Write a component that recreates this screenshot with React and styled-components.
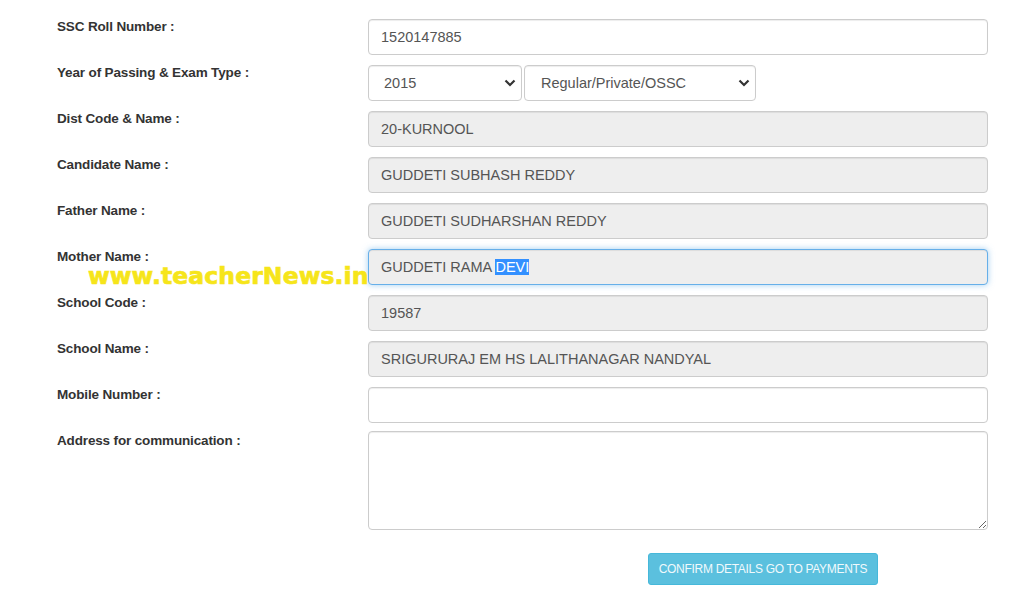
import React from "react";
import styled, { createGlobalStyle } from "styled-components";

const Global = createGlobalStyle`
  html, body { margin: 0; padding: 0; background: #fff; }
  body { font-family: "Liberation Sans", Arial, sans-serif; }
  * { box-sizing: border-box; }
`;

const Page = styled.div`
  position: relative;
  width: 1024px;
  height: 595px;
  overflow: hidden;
  padding: 19px 0 0 57px;
`;

const Form = styled.div`
  display: grid;
  grid-template-columns: 311px 620px;
  row-gap: 10px;
`;

const Label = styled.div`
  font-family: "Liberation Sans", Arial, sans-serif;
  font-weight: bold;
  font-size: 13.5px;
  line-height: 16px;
  color: #333;
  padding-top: 0;
  letter-spacing: -0.15px;
`;

const Field = styled.div`
  height: 36px;
  border: 1px solid ${(p) => (p.$focused ? "#66afe9" : "#ccc")};
  border-radius: 4px;
  background: ${(p) => (p.$disabled ? "#eee" : "#fff")};
  box-shadow: ${(p) =>
    p.$focused
      ? "inset 0 1px 1px rgba(0,0,0,.075), 0 0 6px rgba(102,175,233,.6)"
      : "inset 0 1px 1px rgba(0,0,0,.075)"};
  padding: 0 12px;
  display: flex;
  align-items: center;
  font-size: 14.5px;
  color: #555;
  white-space: pre;
`;

const Selected = styled.span`
  background: #3390ff;
  color: #fff;
`;

const SelectRow = styled.div`
  display: flex;
  gap: 2px;
`;

const Select = styled.div`
  width: ${(p) => p.$w}px;
  height: 36px;
  border: 1px solid #ccc;
  border-radius: 4px;
  background: #fff;
  box-shadow: inset 0 1px 1px rgba(0,0,0,.075);
  display: flex;
  align-items: center;
  justify-content: space-between;
  padding: 0 5px 0 ${(p) => p.$pl}px;
  font-size: 14.5px;
  color: #555;
`;

const TextArea = styled.textarea`
  display: block;
  width: 620px;
  height: 99px;
  border: 1px solid #ccc;
  border-radius: 4px;
  box-shadow: inset 0 1px 1px rgba(0,0,0,.075);
  padding: 6px 12px;
  font-family: "Liberation Sans", Arial, sans-serif;
  font-size: 14.5px;
  color: #555;
  outline: none;
  margin-top: -2px;
`;

const ButtonRow = styled.div`
  padding: 23px 0 0 591px;
`;

const Button = styled.button`
  width: 230px;
  height: 32px;
  background: #5bc0de;
  border: 1px solid #46b8da;
  border-radius: 3px;
  color: #f0f9fc;
  font-family: "Liberation Sans", Arial, sans-serif;
  font-size: 12px;
  text-transform: uppercase;
  letter-spacing: -0.3px;
  padding: 0;
`;

const Watermark = styled.div`
  position: absolute;
  left: 88px;
  top: 264px;
  font-family: "DejaVu Sans", Verdana, sans-serif;
  font-weight: bold;
  font-size: 23.5px;
  line-height: 24px;
  color: #f6e51a;
  -webkit-text-stroke: 0.7px #f6e51a;
  letter-spacing: 0.1px;
  pointer-events: none;
`;

const Chevron = () => (
  <svg width="12" height="8" viewBox="0 0 12 8">
    <path d="M1.5 1.5 L6 6 L10.5 1.5" fill="none" stroke="#333" strokeWidth="2.2" />
  </svg>
);

const rows = [
  { label: "SSC Roll Number :", value: "1520147885" },
  { label: "Year of Passing & Exam Type :", select: true },
  { label: "Dist Code & Name :", value: "20-KURNOOL", disabled: true },
  { label: "Candidate Name :", value: "GUDDETI SUBHASH REDDY", disabled: true },
  { label: "Father Name :", value: "GUDDETI SUDHARSHAN REDDY", disabled: true },
  { label: "Mother Name :", mother: true },
  { label: "School Code :", value: "19587", disabled: true },
  { label: "School Name :", value: "SRIGURURAJ EM HS LALITHANAGAR NANDYAL", disabled: true },
  { label: "Mobile Number :", value: "" },
];

export default function App() {
  return (
    <>
      <Global />
      <Page>
        <Form>
          {rows.map((r) => (
            <React.Fragment key={r.label}>
              <Label>{r.label}</Label>
              {r.select ? (
                <SelectRow>
                  <Select $w={154} $pl={15}>
                    <span>2015</span>
                    <Chevron />
                  </Select>
                  <Select $w={232} $pl={16}>
                    <span>Regular/Private/OSSC</span>
                    <Chevron />
                  </Select>
                </SelectRow>
              ) : r.mother ? (
                <Field $disabled $focused>
                  GUDDETI RAMA <Selected>DEVI</Selected>
                </Field>
              ) : (
                <Field $disabled={r.disabled}>{r.value}</Field>
              )}
            </React.Fragment>
          ))}
          <Label>Address for communication :</Label>
          <TextArea readOnly defaultValue="" />
        </Form>
        <ButtonRow>
          <Button>Confirm Details Go To Payments</Button>
        </ButtonRow>
        <Watermark>www.teacherNews.in</Watermark>
      </Page>
    </>
  );
}
